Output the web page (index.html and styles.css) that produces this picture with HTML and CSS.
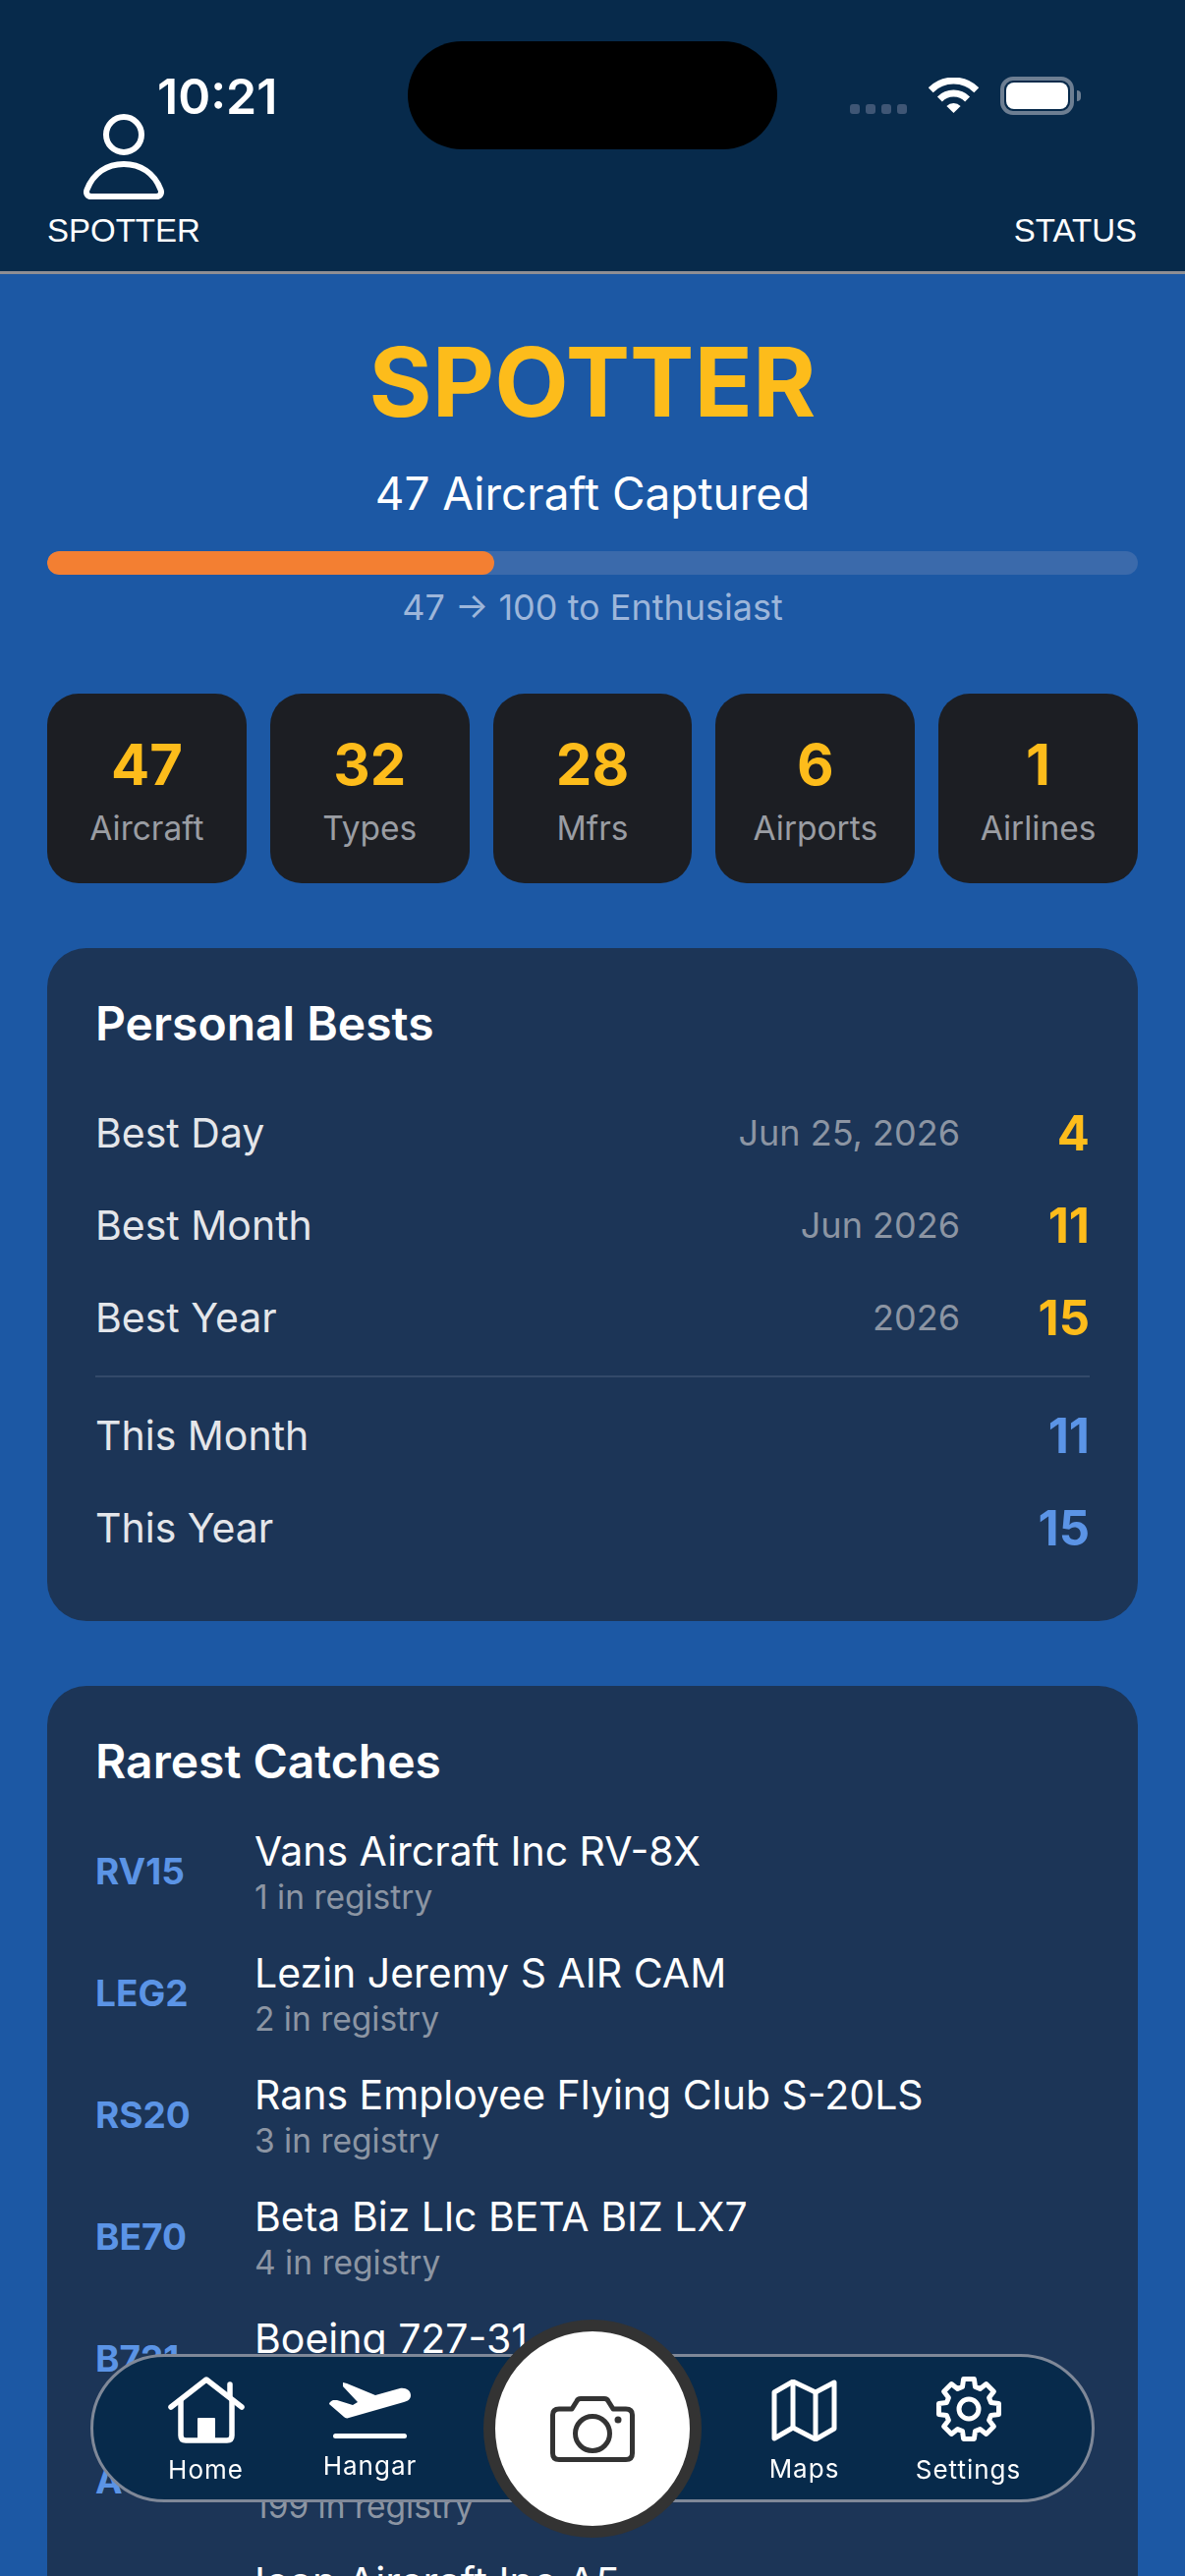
FILE: index.html
```html
<!DOCTYPE html>
<html lang="en">
<head>
    <meta charset="UTF-8">
    <meta name="viewport" content="width=device-width, initial-scale=1.0">
    <title>Spotter</title>
    <link rel="stylesheet" href="styles.css">
</head>
<body>
    <div class="status-bar">
        <span class="time">10:21</span>
        <div class="island"></div>
        <div class="signal"><i></i><i></i><i></i><i></i></div>
        <svg class="wifi" viewBox="0 0 51 37">
            <path d="M2.2 12.7A33 33 0 0 1 48.8 12.7" fill="none" stroke="#fff" stroke-width="7"/>
            <path d="M11.4 21.9A20 20 0 0 1 39.6 21.9" fill="none" stroke="#fff" stroke-width="7"/>
            <path d="M25.5 36L18.4 28.9A10 10 0 0 1 32.6 28.9Z" fill="#fff"/>
        </svg>
        <div class="battery"><div class="battery-level"></div></div>
        <div class="battery-nub"></div>
    </div>

    <header class="top-bar">
        <div class="top-item">
            <svg class="person" viewBox="0 0 82 87" fill="none" stroke="#fff" stroke-width="6">
                <circle cx="41" cy="21" r="18"/>
                <path d="M8 84H74C78 84 80 81 78.500 77C72 60 58 51 41 51C24 51 10 60 3.500 77C2 81 4 84 8 84Z" stroke-linejoin="round"/>
            </svg>
            <span>SPOTTER</span>
        </div>
        <div class="top-item">
            <span>STATUS</span>
        </div>
    </header>

    <main class="content">
        <section class="hero">
            <h1>SPOTTER</h1>
            <p class="captured">47 Aircraft Captured</p>
            <div class="progress"><div class="progress-fill" style="width: 41%"></div></div>
            <p class="next-rank">47 → 100 to Enthusiast</p>
        </section>

        <section class="stats">
            <div class="stat"><b>47</b><span>Aircraft</span></div>
            <div class="stat"><b>32</b><span>Types</span></div>
            <div class="stat"><b>28</b><span>Mfrs</span></div>
            <div class="stat"><b>6</b><span>Airports</span></div>
            <div class="stat"><b>1</b><span>Airlines</span></div>
        </section>

        <section class="card bests">
            <h2>Personal Bests</h2>
            <div class="best-row"><span class="best-label">Best Day</span><span class="best-date">Jun 25, 2026</span><b class="best-value">4</b></div>
            <div class="best-row"><span class="best-label">Best Month</span><span class="best-date">Jun 2026</span><b class="best-value">11</b></div>
            <div class="best-row"><span class="best-label">Best Year</span><span class="best-date">2026</span><b class="best-value">15</b></div>
            <div class="divider"></div>
            <div class="best-row"><span class="best-label">This Month</span><b class="best-value blue">11</b></div>
            <div class="best-row"><span class="best-label">This Year</span><b class="best-value blue">15</b></div>
        </section>

        <section class="card rarest">
            <h2>Rarest Catches</h2>
            <div class="catch"><b class="code">RV15</b><div><p class="catch-name">Vans Aircraft Inc RV-8X</p><p class="catch-count">1 in registry</p></div></div>
            <div class="catch"><b class="code">LEG2</b><div><p class="catch-name">Lezin Jeremy S AIR CAM</p><p class="catch-count">2 in registry</p></div></div>
            <div class="catch"><b class="code">RS20</b><div><p class="catch-name">Rans Employee Flying Club S-20LS</p><p class="catch-count">3 in registry</p></div></div>
            <div class="catch"><b class="code">BE70</b><div><p class="catch-name">Beta Biz Llc BETA BIZ LX7</p><p class="catch-count">4 in registry</p></div></div>
            <div class="catch"><b class="code">B721</b><div><p class="catch-name">Boeing 727-31</p><p class="catch-count">5 in registry</p></div></div>
            <div class="catch"><b class="code">A</b><div><p class="catch-name">American Aviation</p><p class="catch-count">199 in registry</p></div></div>
            <div class="catch"><b class="code">ICON</b><div><p class="catch-name">Icon Aircraft Inc A5</p><p class="catch-count">201 in registry</p></div></div>
        </section>
    </main>

    <nav class="tab-bar">
        <a class="tab tab-home">
            <svg class="icon-home" viewBox="0 0 78 68" fill="none" stroke="#fff" stroke-width="5.500" stroke-linecap="round" stroke-linejoin="round">
                <path d="M3 31L39 3L75 31"/>
                <path d="M63 20V8"/>
                <path d="M13 24V60Q13 65 18 65H60Q65 65 65 60V24"/>
                <path d="M31 64V43H47V64Z" fill="#fff" stroke-width="2"/>
            </svg>
            <span>Home</span>
        </a>
        <a class="tab tab-hangar">
            <svg class="icon-hangar" viewBox="0 0 83 57" fill="#fff">
                <path d="M14 0L18 1L47 13L72 6C78 5 83 8 83 13C83 17 80 19 76 20L20 36C18 37 16 36 15 35L0 22C0 20 2 19 4 18L8 18L24 23L29 20L14 4Z"/>
                <rect x="4" y="52" width="75" height="5" rx="2.500"/>
            </svg>
            <span>Hangar</span>
        </a>
        <div class="tab-gap"></div>
        <a class="tab tab-maps">
            <svg class="icon-maps" viewBox="0 0 67 63" fill="none" stroke="#fff" stroke-width="5" stroke-linejoin="round">
                <path d="M3 13L22 2L45 13L64 3V50L45 61L22 49L3 60Z"/>
                <path d="M22 2V49"/>
                <path d="M45 13V61"/>
            </svg>
            <span>Maps</span>
        </a>
        <a class="tab tab-settings">
            <svg class="icon-settings" viewBox="-34 -34 68 68" fill="none" stroke="#fff" stroke-width="5" stroke-linejoin="round">
                <path d="M-6.500 -22.600L-5.400 -30.500L5.400 -30.500L6.500 -22.600L11.400 -20.600L17.700 -25.400L25.400 -17.700L20.600 -11.400L22.600 -6.500L30.500 -5.400L30.500 5.400L22.600 6.500L20.600 11.400L25.400 17.700L17.700 25.400L11.400 20.600L6.500 22.600L5.400 30.500L-5.400 30.500L-6.500 22.600L-11.400 20.600L-17.700 25.400L-25.400 17.700L-20.600 11.400L-22.600 6.500L-30.500 5.400L-30.500 -5.400L-22.600 -6.500L-20.600 -11.400L-25.400 -17.700L-17.700 -25.400L-11.400 -20.600Z"/>
                <circle r="10"/>
            </svg>
            <span>Settings</span>
        </a>
    </nav>

    <button class="camera-button">
        <svg class="icon-camera" viewBox="0 0 86 67" fill="none" stroke="#333" stroke-width="5" stroke-linejoin="round">
            <path d="M9 13H22L27 5Q28 2.500 31 2.500H55Q58 2.500 59 5L64 13H77Q83.500 13 83.500 19V58Q83.500 64.500 77 64.500H9Q2.500 64.500 2.500 58V19Q2.500 13 9 13Z"/>
            <circle cx="43" cy="38" r="17.500"/>
            <circle cx="69" cy="24" r="3.500" fill="#333" stroke="none"/>
        </svg>
    </button>
</body>
</html>
```

FILE: styles.css
```css
* {
    box-sizing: border-box;
}

html, body {
    margin: 0;
    padding: 0;
    height: 2622px;
    overflow: hidden;
}

body {
    font-family: Inter, "Noto Sans", sans-serif;
    background-color: #1c58a4;
    color: #fff;
}

p, h1, h2 {
    margin: 0;
}

/* status bar sits over the header */
.status-bar {
    position: absolute;
    top: 0;
    left: 0;
    width: 100%;
    height: 160px;
}

.time {
    position: absolute;
    left: 160px;
    top: 68px;
    font-size: 50px;
    line-height: 60px;
    font-weight: 600;
}

.island {
    position: absolute;
    left: 415px;
    top: 42px;
    width: 376px;
    height: 110px;
    background-color: #000;
    border-radius: 55px;
}

.signal {
    position: absolute;
    left: 865px;
    top: 106px;
    display: flex;
    gap: 6px;
}

.signal i {
    display: block;
    width: 10px;
    height: 10px;
    border-radius: 3px;
    background-color: #3f5675;
}

.wifi {
    position: absolute;
    left: 945px;
    top: 79px;
    width: 51px;
    height: 37px;
}

.battery {
    position: absolute;
    left: 1018px;
    top: 78px;
    width: 75px;
    height: 39px;
    border: 4px solid #6d7e92;
    border-radius: 13px;
    padding: 2px;
}

.battery-level {
    width: 100%;
    height: 100%;
    background-color: #fff;
    border-radius: 8px;
}

.battery-nub {
    position: absolute;
    left: 1096px;
    top: 92px;
    width: 4px;
    height: 11px;
    background-color: #6d7e92;
    border-radius: 0 4px 4px 0;
}

.top-bar {
    height: 279px;
    background-color: #072a4b;
    border-bottom: 3px solid #8e8e93;
    padding: 0 49px 22px 48px;
    display: flex;
    justify-content: space-between;
    align-items: flex-end;
}

.top-item {
    display: flex;
    flex-direction: column;
    align-items: center;
    font-family: "Liberation Sans", Arial, sans-serif;
    font-size: 33px;
    line-height: 38px;
}

.person {
    width: 82px;
    height: 87px;
    margin-bottom: 13px;
}

.content {
    padding: 0 48px;
}

.hero {
    text-align: center;
    padding-top: 60px;
}

.hero h1 {
    font-size: 98px;
    line-height: 100px;
    font-weight: 700;
    color: #fdbc1b;
}

.captured {
    font-size: 46px;
    line-height: 60px;
    margin-top: 33px;
}

.progress {
    height: 24px;
    margin-top: 29px;
    background-color: #3b6aab;
    border-radius: 12px;
    overflow: hidden;
}

.progress-fill {
    height: 100%;
    background-color: #f37f32;
    border-radius: 12px;
}

.next-rank {
    font-size: 36px;
    line-height: 44px;
    margin-top: 11px;
    color: #9db6da;
}

.stats {
    display: grid;
    grid-template-columns: repeat(5, 1fr);
    gap: 24px;
    margin-top: 66px;
}

.stat {
    height: 193px;
    background-color: #1c1e23;
    border-radius: 32px;
    display: flex;
    flex-direction: column;
    align-items: center;
    padding-top: 37px;
}

.stat b {
    font-size: 58px;
    line-height: 70px;
    font-weight: 700;
    color: #fdbc1b;
}

.stat span {
    font-size: 33.500px;
    line-height: 44px;
    margin-top: 8px;
    color: #9a9da3;
}

.card {
    background-color: #1c3557;
    border-radius: 40px;
    padding: 0 49px;
}

.card h2 {
    font-size: 48px;
    line-height: 56px;
    font-weight: 600;
}

.bests {
    height: 685px;
    margin-top: 66px;
    padding-top: 49px;
}

.bests h2 {
    margin-bottom: 36px;
}

.best-row {
    height: 94px;
    display: flex;
    align-items: center;
}

.best-label {
    flex: 1;
    font-size: 41px;
    color: #e4e6ea;
}

.best-date {
    font-size: 36px;
    color: #8c95a3;
}

.best-value {
    width: 132px;
    text-align: right;
    font-size: 49px;
    font-weight: 700;
    color: #fdbc1b;
}

.best-value.blue {
    color: #5b94e6;
}

.divider {
    height: 2px;
    margin: 12px 0;
    background-color: #33496a;
}

.rarest {
    margin-top: 66px;
    padding-top: 49px;
}

.rarest h2 {
    margin-bottom: 23px;
}

.catch {
    height: 124px;
    display: flex;
    align-items: center;
}

.code {
    width: 162px;
    flex-shrink: 0;
    font-size: 37px;
    line-height: 46px;
    margin-bottom: 2px;
    font-weight: 700;
    color: #5b94e6;
}

.catch-name {
    font-size: 41px;
    line-height: 50px;
}

.catch-count {
    font-size: 33.500px;
    line-height: 44px;
    color: #8c95a3;
}

/* floating tab bar */
.tab-bar {
    position: fixed;
    left: 92px;
    top: 2396px;
    width: 1022px;
    height: 151px;
    background-color: #072a4b;
    border: 3px solid #7f8898;
    border-radius: 76px;
    padding-left: 31px;
    display: flex;
}

.tab {
    width: 167px;
    display: flex;
    flex-direction: column;
    align-items: center;
    font-size: 26px;
    line-height: 34px;
    letter-spacing: 1px;
}

.tab-gap {
    width: 275px;
}

.tab-home svg {
    width: 78px;
    height: 68px;
    margin-top: 20px;
}

.tab-home span {
    margin-top: 10px;
}

.tab-hangar svg {
    width: 83px;
    height: 57px;
    margin-top: 26px;
}

.tab-hangar span {
    margin-top: 11px;
}

.tab-maps svg {
    width: 67px;
    height: 63px;
    margin-top: 23px;
}

.tab-maps span {
    margin-top: 11px;
}

.tab-settings svg {
    width: 68px;
    height: 68px;
    margin-top: 19px;
}

.tab-settings span {
    margin-top: 11px;
}

.camera-button {
    position: fixed;
    left: 492px;
    top: 2361px;
    width: 222px;
    height: 222px;
    padding: 0;
    background-color: #fff;
    border: 12px solid #333;
    border-radius: 50%;
    display: flex;
    align-items: center;
    justify-content: center;
}

.icon-camera {
    width: 86px;
    height: 67px;
}
```
